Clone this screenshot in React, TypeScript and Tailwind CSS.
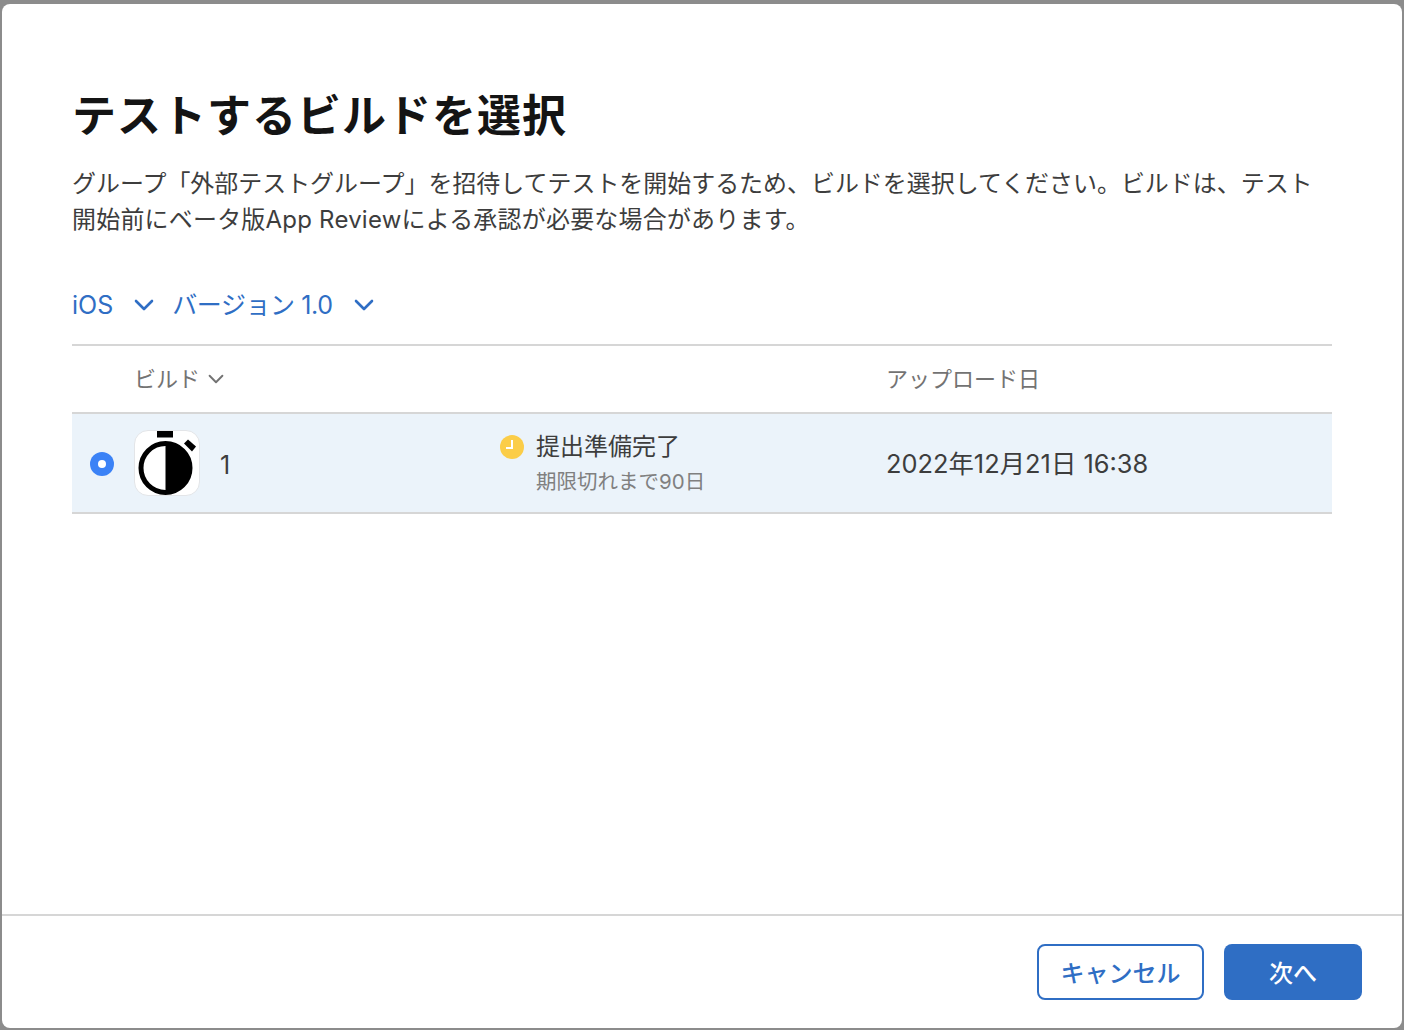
import React from 'react';

const Chevron = ({ className, width = 2.6 }: { className: string; width?: number }) => (
  <svg className={className} viewBox="0 0 20 12" fill="none" stroke="currentColor" strokeWidth={width} strokeLinecap="round" strokeLinejoin="round">
    <path d="M2 2l8 8 8-8" />
  </svg>
);

const AppIcon = () => (
  <div className="w-[66px] h-[66px] rounded-[14px] bg-white border border-[#e3e5e8] shrink-0 overflow-hidden">
    <svg viewBox="1 1 64 64" className="w-full h-full">
      <rect x="23" y="0" width="16" height="7.5" fill="#000" />
      <path d="M50 13.5l4-4 8 7-4 5z" fill="#000" />
      <circle cx="31.5" cy="38" r="24.5" fill="#fff" stroke="#000" strokeWidth="5" />
      <path d="M31.5 13.5a24.5 24.5 0 0 1 0 49z" fill="#000" />
    </svg>
  </div>
);

export default function App() {
  return (
    <div className="w-[1404px] h-[1030px] bg-[#8c8c8c] pt-1 px-0.5 pb-0.5 font-['Inter','Noto_Sans_CJK_JP',sans-serif]">
      <div className="h-full bg-white rounded-lg flex flex-col overflow-hidden">
        <div className="flex-1 pl-[70px] pr-[70px]">
          {/* Header Section */}
          <h1 className="mt-[84px] text-[44px] leading-[56px] font-bold text-[#141414] tracking-[1px]">
            テストするビルドを選択
          </h1>
          <p className="mt-[22px] text-[23.96px] leading-[36px] text-[#3d3d3d] w-[1250px]">
            グループ「外部テストグループ」を招待してテストを開始するため、ビルドを選択してください。ビルドは、テスト<span className="tracking-[0.24px]">開始前にベータ版App Reviewによる承認が必要な場合があります。</span>
          </p>

          {/* Filters */}
          <div className="mt-[49px] flex items-center text-[25px] leading-[36px] text-[#2f6ec4]">
            <span>iOS</span>
            <Chevron className="w-[20px] h-[12px] ml-[21px]" />
            <span className="ml-[18px] tracking-[-0.4px]">バージョン 1.0</span>
            <Chevron className="w-[20px] h-[12px] ml-[21px]" />
          </div>

          {/* Table */}
          <div className="mt-[21px] w-[1260px] border-t-2 border-[#d6d6d6]">
            <div className="h-[66px] flex items-center text-[22px] text-[#737373]">
              <div className="w-[388px] pl-[62px] flex items-center">
                <span>ビルド</span>
                <Chevron className="w-[16px] h-[10px] ml-[8px]" width={2.4} />
              </div>
              <div className="w-[426px]" />
              <span>アップロード日</span>
            </div>
            <div className="h-[102px] bg-[#ebf3fa] border-y-2 border-[#d6d6d6] flex items-center">
              <div className="w-[388px] flex items-center">
                <div className="ml-[18px] mt-[2px] w-6 h-6 rounded-full bg-[#3b82f6] flex items-center justify-center">
                  <div className="w-2 h-2 rounded-full bg-white" />
                </div>
                <div className="ml-[20px]">
                  <AppIcon />
                </div>
                <span className="ml-[20px] mt-[6px] text-[25px] text-[#3d3d3d]">1</span>
              </div>
              <div className="w-[426px] pl-[40px] flex items-start">
                <svg viewBox="0 0 24 24" className="w-6 h-6 shrink-0 mt-[6px]">
                  <circle cx="12" cy="12" r="12" fill="#fbcd48" />
                  <path d="M12 5v8H6" fill="none" stroke="#fff" strokeWidth="2" />
                </svg>
                <div className="ml-3">
                  <div className="text-[24px] leading-[36px] text-[#3d3d3d]">提出準備完了</div>
                  <div className="text-[20.5px] leading-[30px] mt-[2px] text-[#808080]">期限切れまで90日</div>
                </div>
              </div>
              <span className="mt-[2px] text-[25.4px] text-[#3d3d3d]">2022年12月21日 16:38</span>
            </div>
          </div>
        </div>

        {/* Footer */}
        <div className="h-[114px] border-t-2 border-[#d6d6d6] pr-10 pb-7 flex items-end justify-end gap-5">
          <button className="w-[167px] h-[56px] pt-[3px] rounded-lg border-2 border-[#2f6ec4] bg-white text-[24px] text-[#2f6ec4] font-medium">
            キャンセル
          </button>
          <button className="w-[138px] h-[56px] pt-[3px] rounded-lg bg-[#2f6ec4] text-[24px] text-white font-medium">
            次へ
          </button>
        </div>
      </div>
    </div>
  );
}
